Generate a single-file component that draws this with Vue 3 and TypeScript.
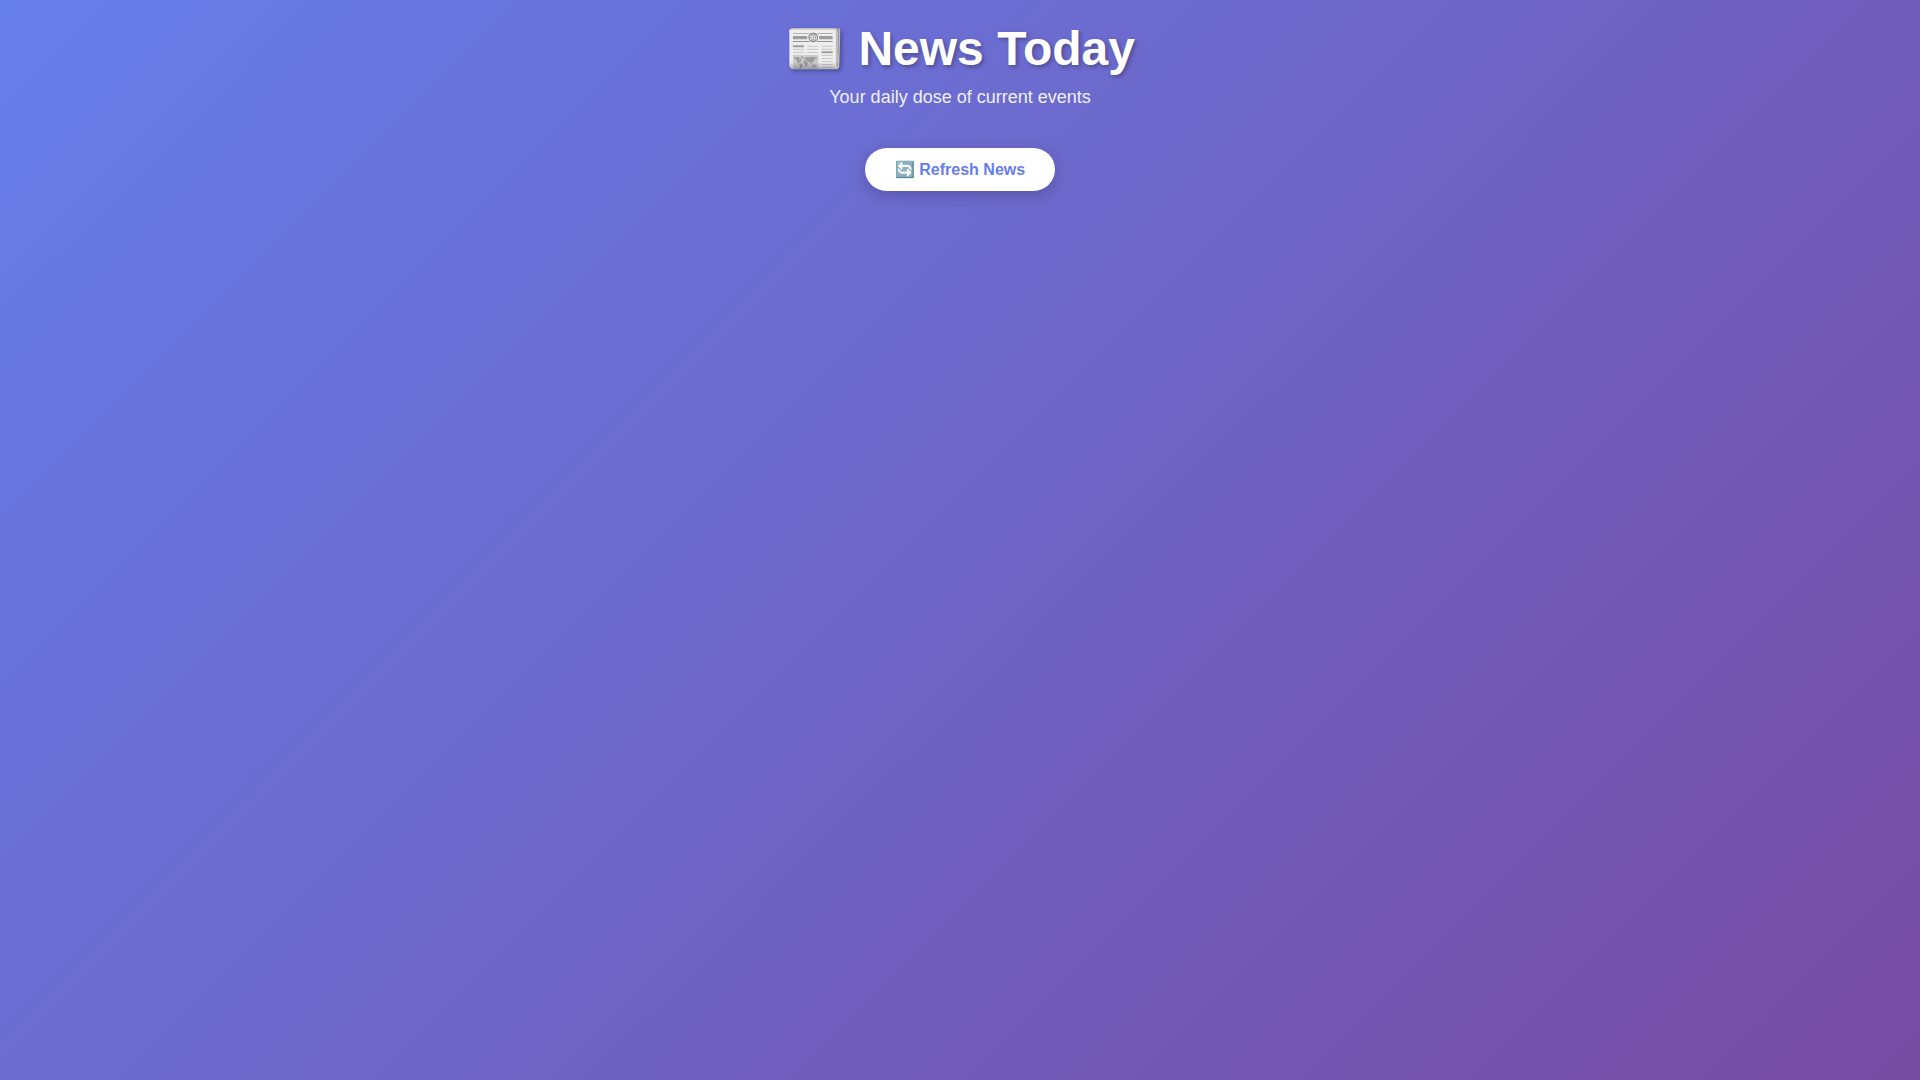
<script setup lang="ts">
import { ref } from 'vue'

const refreshCount = ref<number>(0)

function refreshNews(): void {
  refreshCount.value += 1
}
</script>

<template>
  <main class="page">
    <div class="container">
      <header class="header">
        <h1>📰 News Today</h1>
        <p>Your daily dose of current events</p>
      </header>
      <div class="controls">
        <button type="button" class="refresh" @click="refreshNews">🔄 Refresh News</button>
      </div>
    </div>
  </main>
</template>

<style>
body {
  margin: 0;
}
</style>

<style scoped>
.page {
  box-sizing: border-box;
  min-height: 100vh;
  padding: 20px;
  background: linear-gradient(135deg, #667eea 0%, #764ba2 100%);
  font-family: "Liberation Sans", Arial, sans-serif;
}

.container {
  max-width: 1200px;
  margin: 0 auto;
}

.header {
  margin-bottom: 40px;
  color: white;
  text-align: center;
}

.header h1 {
  margin: 0 0 10px;
  font-size: 48px;
  text-shadow: 2px 2px 4px rgba(0, 0, 0, 0.3);
}

.header p {
  margin: 0;
  font-size: 18px;
  opacity: 0.9;
}

.controls {
  text-align: center;
}

.refresh {
  padding: 12px 30px;
  border: none;
  border-radius: 25px;
  background: white;
  box-shadow: 0 4px 15px rgba(0, 0, 0, 0.2);
  color: #667eea;
  font-family: inherit;
  font-size: 16px;
  font-weight: bold;
  cursor: pointer;
}
</style>
